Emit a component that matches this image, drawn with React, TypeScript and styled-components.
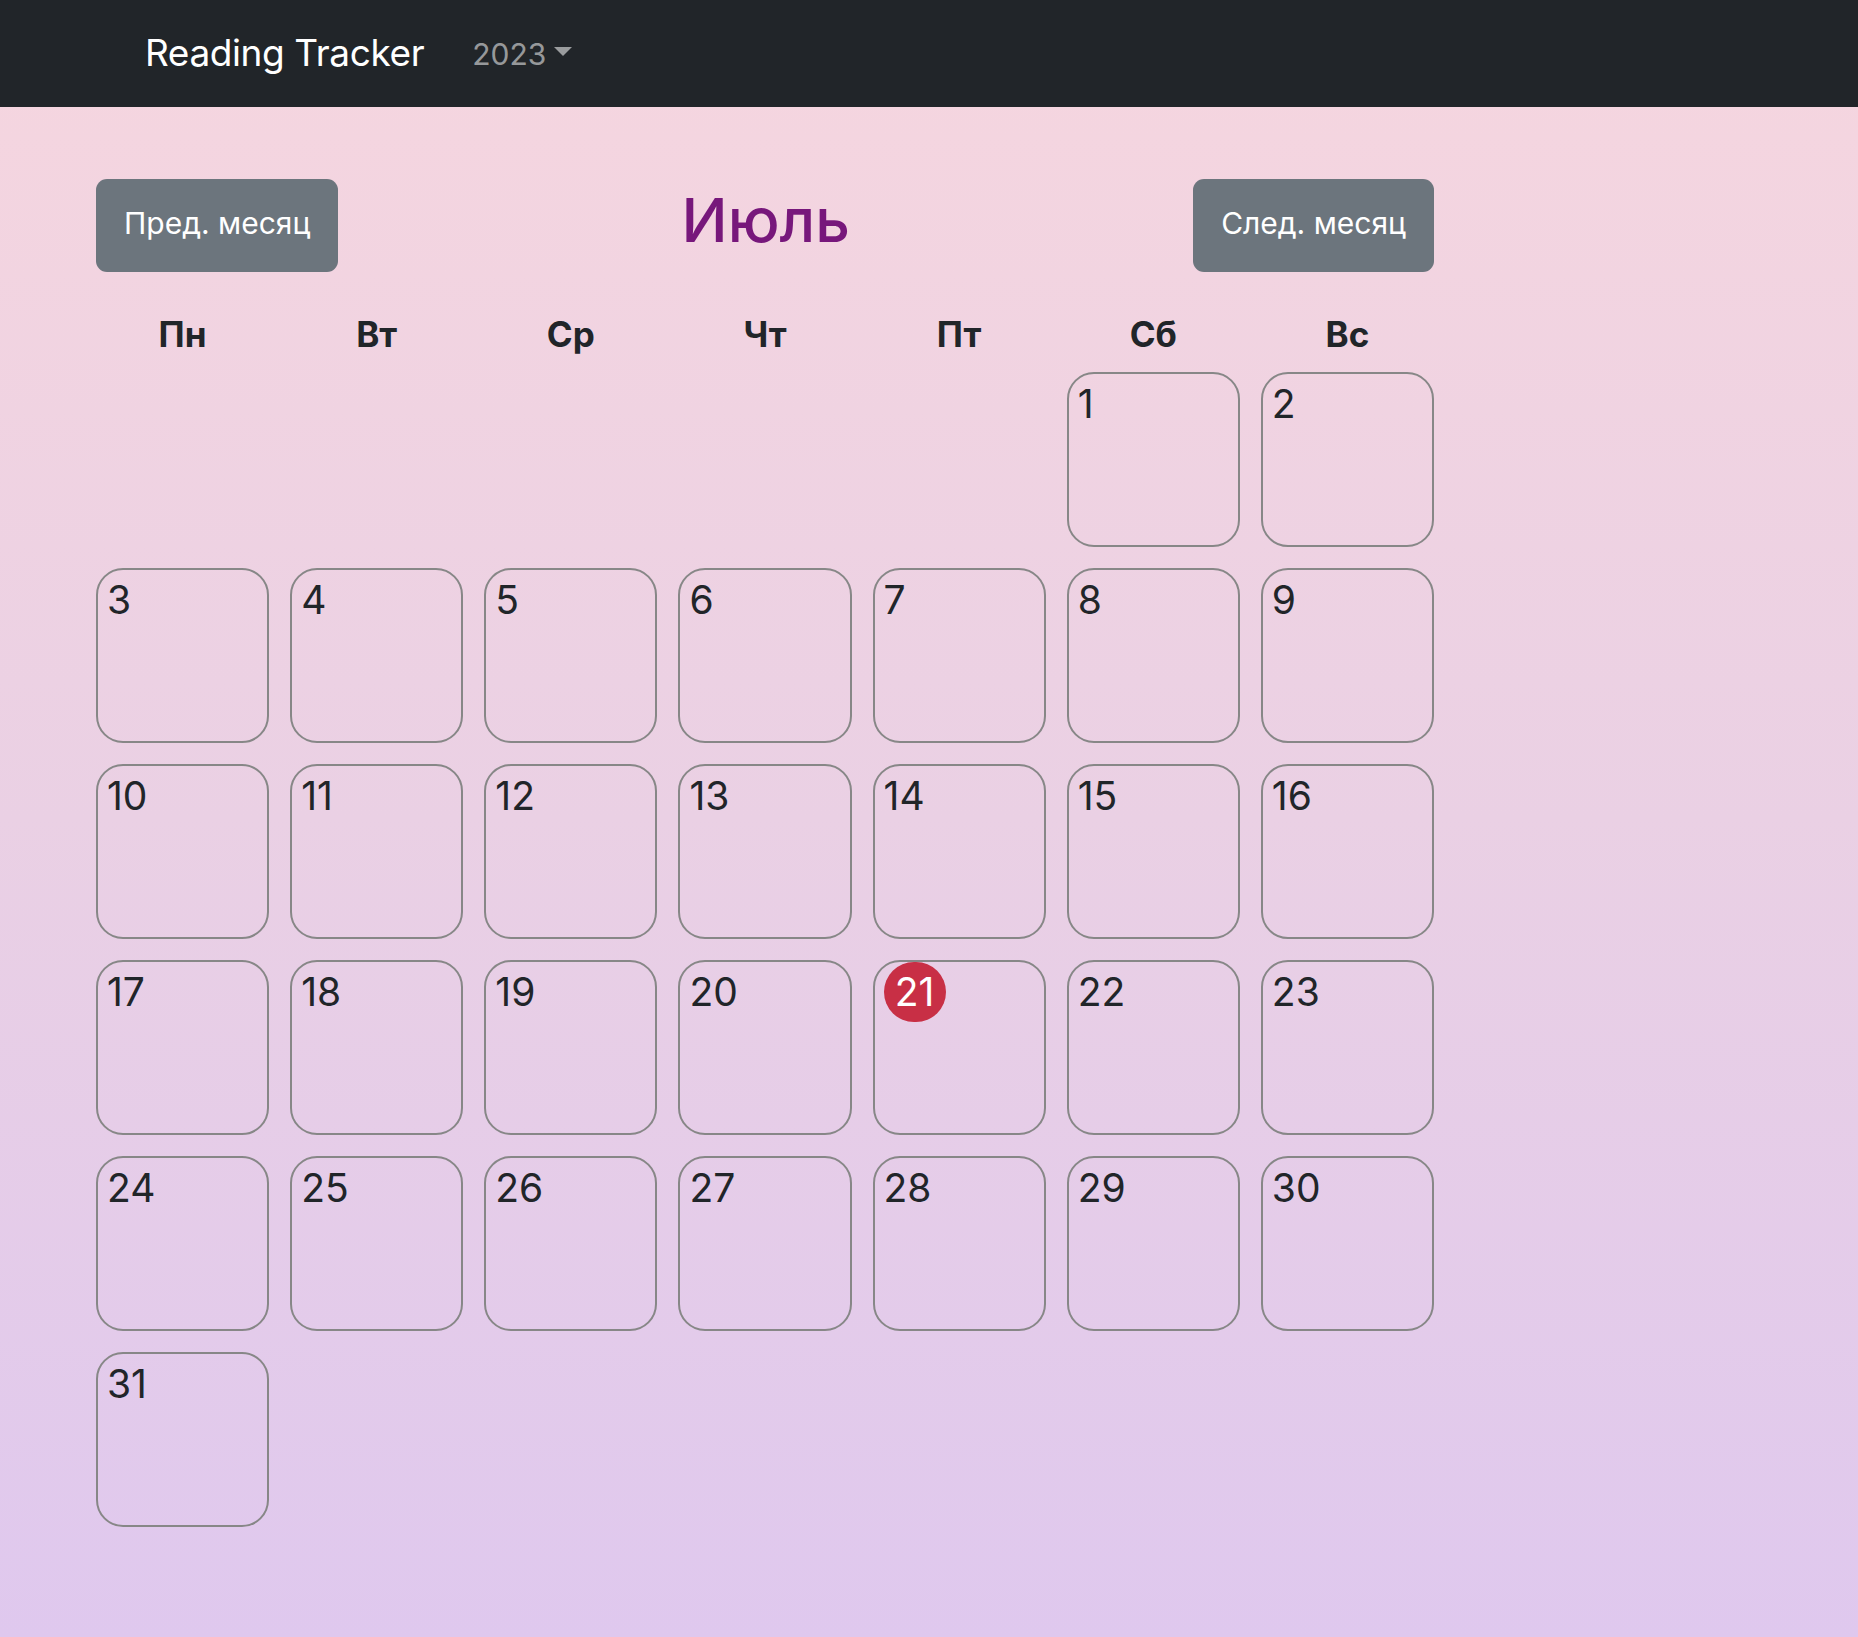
import React from "react";
import styled, { createGlobalStyle } from "styled-components";

const GlobalStyle = createGlobalStyle`
  html, body {
    margin: 0;
    padding: 0;
  }
  body {
    font-family: Inter, "Noto Sans", "Liberation Sans", sans-serif;
    color: #212529;
  }
  * { box-sizing: border-box; }
`;

const Page = styled.div`
  min-height: 100vh;
  background: linear-gradient(180deg, #f6d6df 0%, #ead0e4 50%, #dfc8ee 100%);
`;

const Navbar = styled.nav`
  height: 107px;
  background: #212529;
  display: flex;
  align-items: center;
  padding-left: 145px;
`;

const Brand = styled.a`
  font-size: 37px;
  line-height: 1.2;
  color: #ffffff;
  text-decoration: none;
  letter-spacing: -0.4px;
`;

const NavDropdown = styled.a`
  margin-left: 48px;
  font-size: 30px;
  color: rgba(255, 255, 255, 0.55);
  text-decoration: none;
  display: inline-flex;
  align-items: center;
  &::after {
    content: "";
    display: inline-block;
    margin-left: 8px;
    border-top: 9px solid rgba(255, 255, 255, 0.55);
    border-left: 9px solid transparent;
    border-right: 9px solid transparent;
    border-bottom: 0;
    transform: translateY(-2px);
  }
`;

const Main = styled.main`
  width: 1338px;
  margin-left: 96px;
  padding-top: 72px;
`;

const HeaderRow = styled.div`
  display: flex;
  justify-content: space-between;
  align-items: center;
`;

const NavButton = styled.button`
  height: 93px;
  padding: 0 28px 6px;
  font-family: inherit;
  font-size: 30px;
  color: #ffffff;
  background: #6c757d;
  border: none;
  border-radius: 11px;
  cursor: pointer;
`;

const MonthTitle = styled.h2`
  margin: 0 0 10px;
  font-size: 61px;
  font-weight: 500;
  color: #77177b;
  line-height: 1.2;
`;

const WeekRow = styled.div`
  display: grid;
  grid-template-columns: repeat(7, 1fr);
  column-gap: 21px;
  margin-top: 40px;
  margin-bottom: 16px;
`;

const WeekDay = styled.div`
  text-align: center;
  font-size: 35px;
  font-weight: 700;
  line-height: 44px;
  color: #212529;
`;

const DaysGrid = styled.div`
  display: grid;
  grid-template-columns: repeat(7, 1fr);
  grid-auto-rows: 175px;
  column-gap: 21px;
  row-gap: 21px;
`;

const DayCell = styled.div<{ $empty?: boolean }>`
  border: ${(p) => (p.$empty ? "none" : "2px solid #878787")};
  border-radius: 27px;
  padding: 0 0 0 9px;
`;

const DayNumber = styled.span<{ $today?: boolean }>`
  display: inline-block;
  font-size: 39px;
  line-height: 60px;
  height: 60px;
  color: ${(p) => (p.$today ? "#ffffff" : "#212529")};
  background: ${(p) => (p.$today ? "#c82f45" : "transparent")};
  border-radius: ${(p) => (p.$today ? "30px" : "0")};
  padding: ${(p) => (p.$today ? "0 9px" : "0")};
  min-width: ${(p) => (p.$today ? "62px" : "0")};
  text-align: center;
`;

const weekDays = ["Пн", "Вт", "Ср", "Чт", "Пт", "Сб", "Вс"];

export default function App() {
  const leading = 5;
  const daysInMonth = 31;
  const today = 21;
  const cells: (number | null)[] = [];
  for (let i = 0; i < leading; i++) cells.push(null);
  for (let d = 1; d <= daysInMonth; d++) cells.push(d);

  return (
    <>
      <GlobalStyle />
      <Page>
        <Navbar>
          <Brand href="#">Reading Tracker</Brand>
          <NavDropdown href="#">2023</NavDropdown>
        </Navbar>
        <Main>
          <HeaderRow>
            <NavButton>Пред. месяц</NavButton>
            <MonthTitle>Июль</MonthTitle>
            <NavButton>След. месяц</NavButton>
          </HeaderRow>
          <WeekRow>
            {weekDays.map((d) => (
              <WeekDay key={d}>{d}</WeekDay>
            ))}
          </WeekRow>
          <DaysGrid>
            {cells.map((d, i) =>
              d === null ? (
                <DayCell key={"e" + i} $empty />
              ) : (
                <DayCell key={d}>
                  <DayNumber $today={d === today}>{d}</DayNumber>
                </DayCell>
              )
            )}
          </DaysGrid>
        </Main>
      </Page>
    </>
  );
}
